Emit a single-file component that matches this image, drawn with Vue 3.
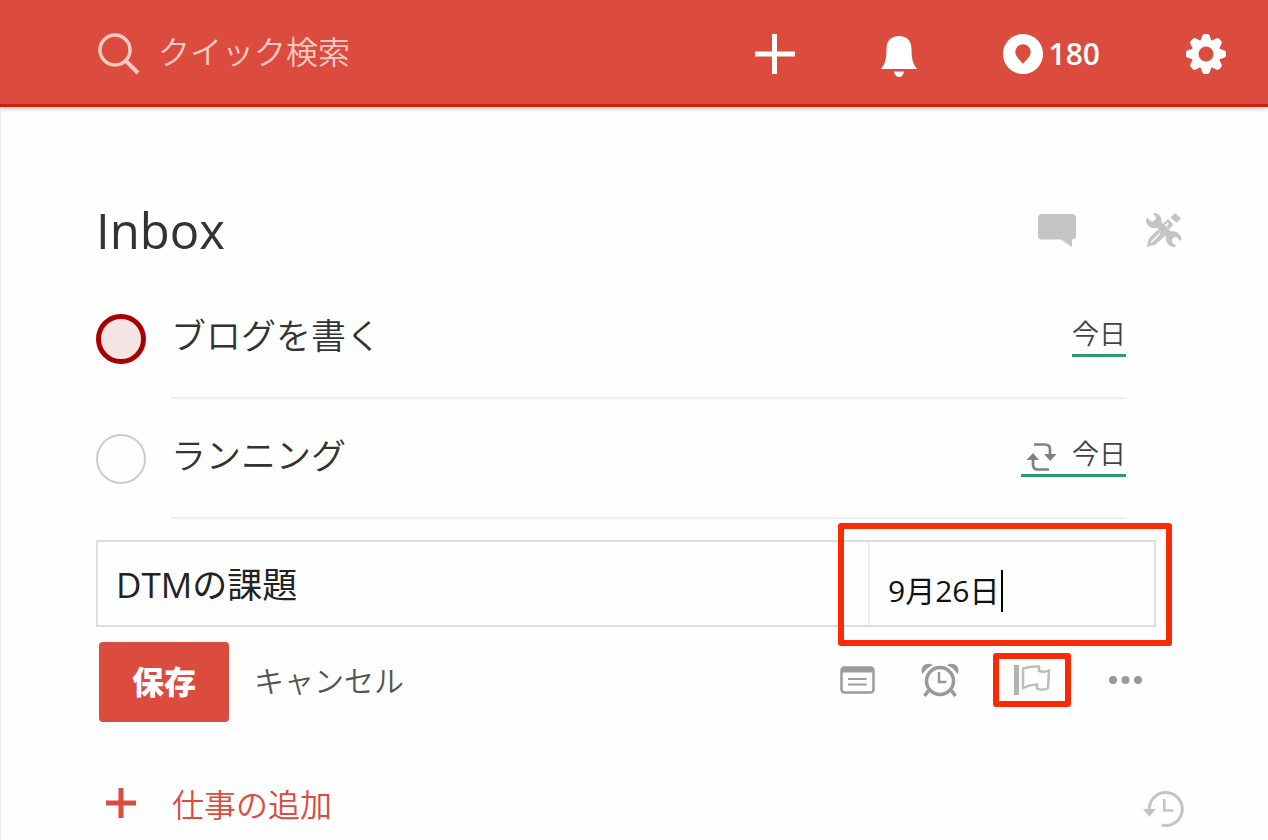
<script setup>
import { ref } from 'vue'

const search = ref('')
const karma = ref(180)

const tasks = ref([
  { id: 1, title: 'ブログを書く', due: '今日', priority: true, repeat: false, done: false },
  { id: 2, title: 'ランニング', due: '今日', priority: false, repeat: true, done: false }
])

// Task being edited
const editTitle = ref('DTMの課題')
const editDate = ref('9月26日')
const editing = ref(true)

function save() {
  if (!editTitle.value) return
  tasks.value.push({
    id: Date.now(),
    title: editTitle.value,
    due: editDate.value,
    priority: false,
    repeat: false,
    done: false
  })
  editing.value = false
}
</script>

<template>
  <div class="app">
    <header class="topbar">
      <label for="search" class="search-icon" aria-label="クイック検索">
        <svg width="42" height="42" viewBox="0 0 42 42" fill="none" stroke="#fcc9c3" stroke-width="3.500">
          <circle cx="17" cy="17" r="15" />
          <path d="M28 28L40 40" stroke-width="4" />
        </svg>
      </label>
      <input id="search" v-model="search" type="text" class="search" placeholder="クイック検索" />

      <nav class="tools">
        <button type="button" aria-label="追加">
          <svg width="40" height="40" viewBox="0 0 40 40" fill="none" stroke="#fff" stroke-width="5">
            <path d="M19.500 0v40M0 20h40" />
          </svg>
        </button>
        <button type="button" aria-label="通知">
          <svg width="36" height="45" viewBox="0 -4 36 45" fill="#fff">
            <path d="M18 0C26 0 30.500 5 30.500 13C30.500 23 32 28 36 33H0C4 28 5.500 23 5.500 13C5.500 5 10 0 18 0Z" />
            <path d="M13 35.500H23C22.500 39 20.500 41 18 41S13.500 39 13 35.500Z" />
          </svg>
        </button>
        <button type="button" class="karma">
          <svg width="40" height="40" viewBox="0 0 40 40">
            <circle cx="20" cy="20" r="20" fill="#fff" />
            <path d="M20 30C17 26 12.300 22.500 12.300 18A7.700 7.700 0 0 1 27.700 18C27.700 22.500 23 26 20 30Z" fill="#db4c3f" />
          </svg>
          <span>{{ karma }}</span>
        </button>
        <button type="button" aria-label="設定">
          <svg width="40" height="40" viewBox="-20 -20 40 40">
            <circle r="11" fill="none" stroke="#fff" stroke-width="7" />
            <path
              v-for="n in 8"
              :key="n"
              d="M-5.500 -13L-3.800 -18Q-3.300 -20 -1.500 -20H1.500Q3.300 -20 3.800 -18L5.500 -13Z"
              fill="#fff"
              :transform="`rotate(${n * 45})`"
            />
          </svg>
        </button>
      </nav>
    </header>

    <main class="content">
      <div class="title-row">
        <h1>Inbox</h1>
        <button type="button" aria-label="コメント">
          <svg width="38" height="33" viewBox="0 0 38 33" fill="#c4c4c4">
            <path d="M4 0H34Q38 0 38 4V22Q38 25 34 25.500V33L23 25.500H4Q0 25.500 0 21.500V4Q0 0 4 0Z" />
          </svg>
        </button>
        <button type="button" aria-label="ツール">
          <svg width="36" height="34" viewBox="0 0 36 34" fill="#c4c4c4">
            <path d="M8 0C13 0 16 4 15.500 9L25 18.500C30 17.500 35 21 35.500 26L34.500 28L30.500 24C27 24 25 27 26.500 29.500L30 33L29 34C23 34 19 29 20 24L11 15C6 16 0 13 0 7L1 4.500L5 8.500C8 9 11 6 9.500 3.500L7 1Z" />
            <path d="M0.500 34L3 25.500L12 16.500L19 23L9.500 31.500Z" />
            <path d="M5 29.500L14 20.500" stroke="#fff" stroke-width="1.200" />
            <path d="M17.500 10.500L22 6L27.500 11.500L23 16L20.500 13.500L23 11L21.500 9.500L19 12Z" />
            <path d="M24.500 4.500L29 0L35 5.500L30.500 10Z" />
          </svg>
        </button>
      </div>

      <ul class="tasks">
        <li v-for="task in tasks" :key="task.id" class="task">
          <input
            :id="'task-' + task.id"
            v-model="task.done"
            type="checkbox"
            class="check"
            :class="{ priority: task.priority }"
          />
          <div class="task-body">
            <label :for="'task-' + task.id">{{ task.title }}</label>
            <span class="due">
              <svg v-if="task.repeat" class="repeat" width="31" height="28" viewBox="0 0 31 28">
                <path d="M8 1.500H19Q24 1.500 24 6.500V12M23 26.500H12Q7 26.500 7 21.500V16" fill="none" stroke="#808080" stroke-width="2.700" />
                <path d="M18 11H30.500L24.200 18ZM0.500 17H13L7 10Z" fill="#808080" />
              </svg>
              {{ task.due }}
            </span>
          </div>
        </li>
      </ul>

      <form v-if="editing" class="editor" @submit.prevent="save">
        <div class="fields">
          <input v-model="editTitle" type="text" class="title-input" aria-label="仕事" />
          <div class="date-field">
            <input v-model="editDate" type="text" class="date-input" aria-label="期日" />
            <span class="caret"></span>
            <span class="mark mark-date"></span>
          </div>
        </div>

        <div class="actions">
          <button type="submit" class="btn-save">保存</button>
          <button type="button" class="btn-cancel" @click="editing = false">キャンセル</button>

          <div class="options">
            <button type="button" aria-label="メモ">
              <svg width="35" height="28" viewBox="0 0 35 28" fill="none" stroke="#999d9d">
                <rect x="1.500" y="1.500" width="32" height="25" rx="3" stroke-width="2.500" />
                <path d="M2 4H33" stroke-width="5" />
                <path d="M8 13H26.500M8 18.500H26.500" stroke-width="2" />
              </svg>
            </button>
            <button type="button" aria-label="リマインダー">
              <svg width="38" height="34" viewBox="0 0 38 34" fill="none" stroke="#999">
                <circle cx="19" cy="18" r="13.500" stroke-width="3.500" />
                <path d="M18 9V19H25.500" stroke-width="2.500" />
                <path d="M7.500 27.500L3.500 33M30.500 27.500L34.500 33" stroke-width="3.500" />
                <path d="M1.500 11C-2 4 5 -2 12 2C7.500 4 4 7 1.500 11ZM36.500 11C40 4 33 -2 26 2C30.500 4 34 7 36.500 11Z" fill="#999" stroke="none" />
              </svg>
            </button>
            <button type="button" class="flag" aria-label="優先度">
              <svg width="38" height="32" viewBox="0 0 38 32" fill="none">
                <path d="M3.500 1V31" stroke="#b3b3b3" stroke-width="5" />
                <path d="M10 4.500C15 3 20 2 26 2.500V7C30 8 33 8 36 6.500L35 24C31 26 27 26 24 24.500V20.500C20 20.500 14 22 10 24Z" stroke="#bdbdbd" stroke-width="2.500" />
              </svg>
              <span class="mark mark-flag"></span>
            </button>
            <button type="button" aria-label="その他">
              <svg width="38" height="10" viewBox="0 0 38 10" fill="#999">
                <circle cx="8" cy="5" r="4" />
                <circle cx="20.500" cy="5" r="4" />
                <circle cx="33" cy="5" r="4" />
              </svg>
            </button>
          </div>
        </div>
      </form>

      <div class="bottom">
        <button type="button" class="add" @click="editing = true">
          <svg width="30" height="30" viewBox="0 0 30 30" fill="none" stroke="#db4c3f" stroke-width="5">
            <path d="M15 0V30M0 15H30" />
          </svg>
          仕事の追加
        </button>
        <button type="button" class="history" aria-label="履歴">
          <svg width="41" height="37" viewBox="0 0 41 37" fill="none" stroke="#c4c4c4">
            <path d="M6.300 20A16.500 16.500 0 1 1 18.700 35" stroke-width="3" />
            <path d="M21.300 9V20.500H30.300" stroke-width="2.500" />
            <path d="M0 19H12.700L6.300 27Z" fill="#c4c4c4" stroke="none" />
          </svg>
        </button>
      </div>
    </main>
  </div>
</template>

<style>
body {
  margin: 0;
  background-color: #fefefe;
}
</style>

<style scoped>
.app {
  font-family: "Open Sans", "Noto Sans CJK JP", sans-serif;
  font-weight: 400;
  color: #333;
  min-height: 100vh;
  display: flex;
  flex-direction: column;
}

button {
  display: flex;
  align-items: center;
  padding: 0;
  border: none;
  background: none;
  font-family: inherit;
  cursor: pointer;
}

input {
  box-sizing: border-box;
  margin: 0;
  font-family: inherit;
  outline: none;
}

svg {
  display: block;
  flex-shrink: 0;
}

/* Top bar */
.topbar {
  display: flex;
  align-items: center;
  height: 100px;
  padding: 4px 42px 0 98px;
  background-color: #db4c3f;
  border-bottom: 3px solid #c9230d;
  box-shadow: 0 1px 5px rgba(0, 0, 0, 0.3);
  position: relative;
}

.search {
  flex: 1;
  min-width: 0;
  margin-left: 18px;
  padding: 0 0 6px;
  border: none;
  background: none;
  color: #fff;
  font-size: 32px;
  font-weight: 350;
}

.search::placeholder {
  color: #fcc9c3;
  opacity: 1;
}

.tools {
  display: flex;
  align-items: center;
  gap: 86px;
}

.karma {
  gap: 6px;
  color: #fff;
  font-size: 30px;
  font-weight: 600;
  line-height: 40px;
}

/* Project */
.content {
  flex: 1;
  padding: 93px 84px 0 95px;
  border-left: 1px solid #eee;
}

.title-row {
  display: flex;
  align-items: center;
  gap: 70px;
  height: 60px;
  margin: 0 2px 19px 0;
}

h1 {
  flex: 1;
  margin: 0;
  font-size: 49px;
  font-weight: 400;
  line-height: 60px;
}

.tasks {
  margin: 0 58px 0 0;
  padding: 0;
  list-style: none;
}

.task {
  display: flex;
  align-items: center;
  gap: 25px;
  height: 120px;
}

.check {
  appearance: none;
  flex-shrink: 0;
  width: 50px;
  height: 50px;
  border: 2px solid #ccc;
  border-radius: 50%;
}

.check.priority {
  border: 5px solid #a80000;
  background-color: #f5e4e4;
}

.task-body {
  display: flex;
  flex: 1;
  align-items: center;
  justify-content: space-between;
  box-sizing: border-box;
  height: 120px;
  padding-bottom: 6px;
  border-bottom: 2px solid #eee;
  font-size: 35px;
  font-weight: 350;
}

.task-body label {
  padding-bottom: 4px;
}

.due {
  display: flex;
  align-items: center;
  gap: 15px;
  border-bottom: 3px solid #2a9d6b;
  color: #444;
  font-size: 27px;
  line-height: 40px;
}

.repeat {
  margin: 7px 0 0 5px;
}

/* Editor */
.editor {
  margin: 21px 28px 0 0;
}

.fields {
  display: flex;
  height: 87px;
  box-sizing: border-box;
  border: 2px solid #ddd;
}

.title-input {
  flex: 1;
  min-width: 0;
  padding: 0 18px 2px;
  border: none;
  background: none;
  color: #222;
  font-size: 35px;
}

.date-field {
  position: relative;
  width: 284px;
  border-left: 2px solid #eee;
}

.date-input {
  width: 100%;
  height: 100%;
  padding: 10px 18px 0;
  border: none;
  background: none;
  color: #111;
  font-size: 30px;
}

.caret {
  position: absolute;
  left: 131px;
  top: 28px;
  width: 2px;
  height: 42px;
  background-color: #000;
}

/* Red highlight frames */
.mark {
  position: absolute;
  box-sizing: border-box;
  border: 6px solid #fa2a05;
  border-radius: 3px;
  pointer-events: none;
}

.mark-date {
  inset: -19px -18px -21px -32px;
}

.mark-flag {
  inset: -11px -12px;
}

.actions {
  display: flex;
  align-items: center;
  margin: 15px 13px 0 3px;
}

.btn-save {
  justify-content: center;
  width: 130px;
  height: 80px;
  padding-bottom: 4px;
  border-radius: 4px;
  background-color: #db4c3f;
  color: #fff;
  font-size: 32px;
  font-weight: 800;
}

.btn-cancel {
  margin-left: 25px;
  padding-bottom: 6px;
  color: #555;
  font-size: 30px;
  font-weight: 350;
}

.options {
  display: flex;
  align-items: center;
  gap: 46px;
  margin-left: auto;
  padding-bottom: 4px;
}

.flag {
  position: relative;
  padding: 0 8px;
}

/* Bottom row */
.bottom {
  display: flex;
  align-items: center;
  justify-content: space-between;
  margin-top: 56px;
}

.add {
  gap: 36px;
  padding-left: 10px;
  color: #db4c3f;
  font-size: 32px;
  font-weight: 350;
}

.history {
  padding-top: 12px;
}
</style>
